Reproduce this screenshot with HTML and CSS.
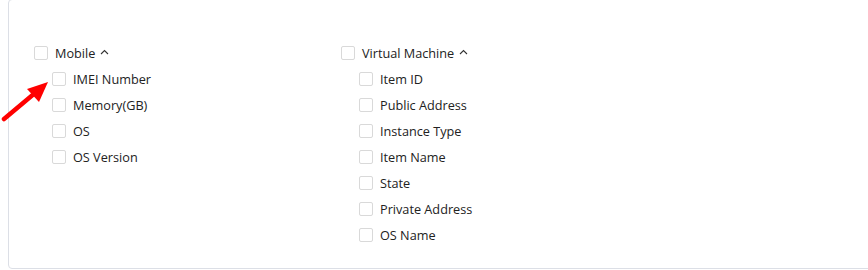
FILE: index.html
```html
<!DOCTYPE html>
<html lang="en">
<head>
    <meta charset="UTF-8">
    <title>Columns</title>
    <link rel="stylesheet" href="styles.css">
</head>
<body>
    <div class="panel">
        <div class="groups">
            <!-- Mobile -->
            <div class="group">
                <label class="row">
                    <span class="box"></span>
                    <span class="label">Mobile</span>
                    <svg class="caret" width="9" height="6" viewBox="0 0 9 6"><path d="M1 5 L4.5 1.5 L8 5" fill="none" stroke="#333" stroke-width="1.1"/></svg>
                </label>
                <div class="children">
                    <label class="row"><span class="box"></span><span class="label">IMEI Number</span></label>
                    <label class="row"><span class="box"></span><span class="label">Memory(GB)</span></label>
                    <label class="row"><span class="box"></span><span class="label">OS</span></label>
                    <label class="row"><span class="box"></span><span class="label">OS Version</span></label>
                </div>
            </div>
            <!-- Virtual Machine -->
            <div class="group">
                <label class="row">
                    <span class="box"></span>
                    <span class="label">Virtual Machine</span>
                    <svg class="caret" width="9" height="6" viewBox="0 0 9 6"><path d="M1 5 L4.5 1.5 L8 5" fill="none" stroke="#333" stroke-width="1.1"/></svg>
                </label>
                <div class="children">
                    <label class="row"><span class="box"></span><span class="label">Item ID</span></label>
                    <label class="row"><span class="box"></span><span class="label">Public Address</span></label>
                    <label class="row"><span class="box"></span><span class="label">Instance Type</span></label>
                    <label class="row"><span class="box"></span><span class="label">Item Name</span></label>
                    <label class="row"><span class="box"></span><span class="label">State</span></label>
                    <label class="row"><span class="box"></span><span class="label">Private Address</span></label>
                    <label class="row"><span class="box"></span><span class="label">OS Name</span></label>
                </div>
            </div>
        </div>
        <!-- Flecha indicadora -->
        <svg class="pointer" width="52" height="44" viewBox="0 0 52 44">
            <path d="M3 40 L34 14" stroke="#f00" stroke-width="4.5" stroke-linecap="round"/>
            <path d="M47 3 L26 10 L38 23 Z" fill="#f00"/>
        </svg>
    </div>
</body>
</html>
```

FILE: styles.css
```css
/* Base */
body {
    margin: 0;
    padding: 0;
    background: #fff;
    overflow: hidden;
    font-family: "Open Sans", "Noto Sans", sans-serif;
    font-size: 12.7px;
    color: #222;
}

/* Panel */
.panel {
    position: relative;
    margin: -1px 0 0 8px;
    width: 900px;
    padding: 40px 0 20px 25px;
    border: 1px solid #dcdfe6;
    border-radius: 4px;
    box-sizing: border-box;
}

.groups {
    display: flex;
}

.group {
    width: 307px;
}

.children {
    padding-left: 18px;
}

.row {
    display: flex;
    align-items: center;
    height: 26px;
}

.box {
    width: 12px;
    height: 12px;
    border: 1px solid #d9d9d9;
    border-radius: 2px;
    background: #fff;
    margin-right: 7px;
    flex-shrink: 0;
}

.label {
    line-height: 26px;
}

.caret {
    margin-left: 5px;
    margin-top: -2px;
}

/* Flecha */
.pointer {
    position: absolute;
    left: -8px;
    top: 79px;
}
```
